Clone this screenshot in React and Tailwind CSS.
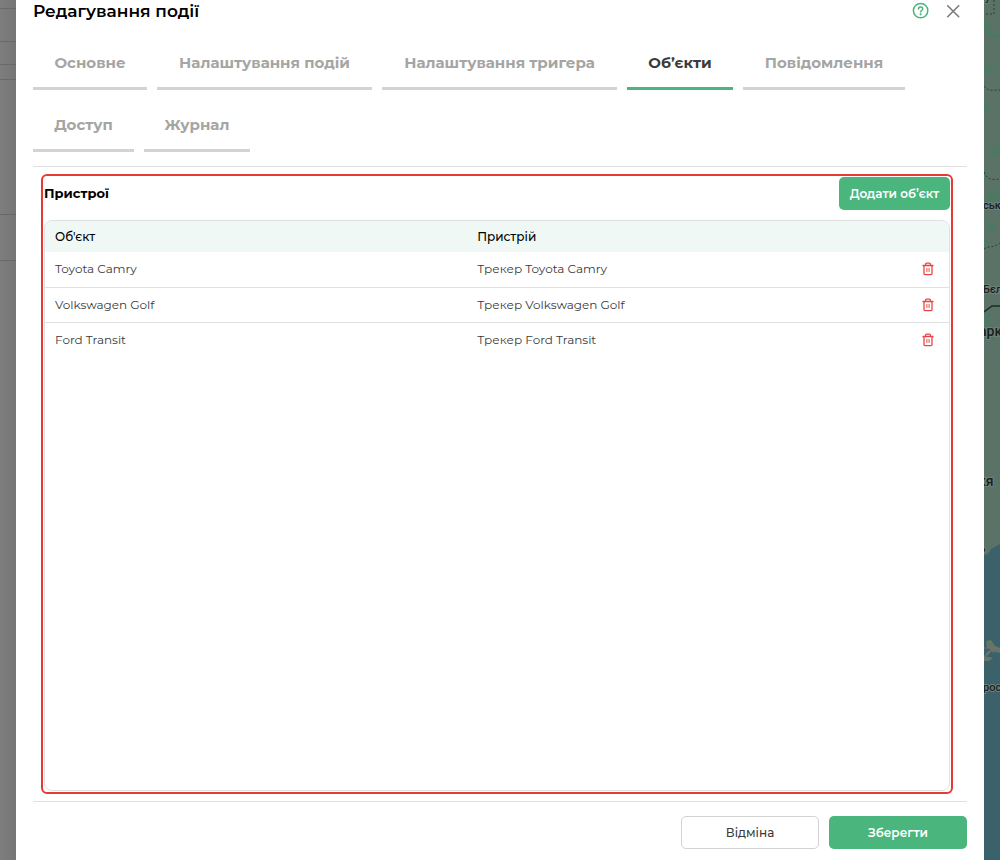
import React, { useState } from "react";

const tabs = [
  { label: "Основне", width: "min-w-[114px]" },
  { label: "Налаштування подій", width: "min-w-[215px]" },
  { label: "Налаштування тригера", width: "min-w-[235px]" },
  { label: "Об’єкти", width: "min-w-[106px]" },
  { label: "Повідомлення", width: "min-w-[162px]" },
  { label: "Доступ", width: "min-w-[101px]" },
  { label: "Журнал", width: "min-w-[106px]" },
];

const devices = [
  { object: "Toyota Camry", device: "Трекер Toyota Camry" },
  { object: "Volkswagen Golf", device: "Трекер Volkswagen Golf" },
  { object: "Ford Transit", device: "Трекер Ford Transit" },
];

function HelpIcon() {
  return (
    <svg width="18" height="18" viewBox="0 0 18 18" fill="none" stroke="#4ab57d" strokeWidth="1.5" strokeLinecap="round" aria-hidden="true">
      <circle cx="8.600" cy="8.600" r="7.200" />
      <path d="M6.500 7.100c0-1.300 1-2 2.100-2s2.100.8 2.100 1.900c0 1.500-2.100 1.500-2.100 2.900" />
      <circle cx="8.600" cy="12.300" r="1.100" fill="#4ab57d" stroke="none" />
    </svg>
  );
}

function CloseIcon() {
  return (
    <svg width="14" height="14" viewBox="0 0 14 14" fill="none" stroke="#7c7c7c" strokeWidth="1.600" strokeLinecap="round" aria-hidden="true">
      <path d="M1.700 1.700l11 11M12.700 1.700l-11 11" />
    </svg>
  );
}

function TrashIcon() {
  return (
    <svg width="12" height="14" viewBox="0 0 12 14" fill="none" stroke="#ea4444" strokeWidth="1.300" strokeLinecap="round" strokeLinejoin="round" aria-hidden="true">
      <path d="M1 3.500h10M3.600 3.300V2.100c0-.7.4-1 1-1h2.800c.6 0 1 .3 1 1v1.200M2 3.700v7.700c0 .8.500 1.300 1.300 1.300h5.400c.8 0 1.300-.5 1.300-1.300V3.700" />
      <path d="M4.900 6.500v3M7.100 6.500v3" strokeWidth="1" />
    </svg>
  );
}

function MapStrip() {
  return (
    <svg className="h-full w-full" viewBox="0 0 16 860" preserveAspectRatio="xMinYMin slice" aria-hidden="true">
      <rect width="16" height="860" fill="#5b7367" />
      <g fill="#4a7a62">
        <path d="M0 20c4 0 5 4 6 10 2 5 6 5 10 4v4C7 40 2 34 0 27z" />
        <path d="M1 67c4-1 6-4 10-4l-3 8-7 4zM0 103l4 3 2 8-6-3zM5 151l10-8v10l-8 6zM0 168c5 3 5 10 0 15zM3 192l8-4 5 10v8L8 200l-7 6zM3 219l9 7-3 8-6-5zM0 240l5-3v5l-5 6zM0 318l6-8-1 16-5 4z" opacity=".7" />
      </g>
      <path d="M0 87C2 77 8 80 12 75l4-5" fill="none" stroke="#596f7b" />
      <path d="M0 212h16M0 344l16 24M0 444l16 6" fill="none" stroke="#586f77" />
      <g fill="none" stroke="#303c36" strokeDasharray="2 2">
        <path d="M10 0v14H0M0 86c4 6 10 4 16 4M0 172c3 8 8 8 16 7M0 249c5-4 8 0 16-6" />
      </g>
      <path d="M0 312l8-6h8" fill="none" stroke="#202a26" strokeWidth="1.500" />
      <path d="M3 316l3-4-1 6zM8 337l3 3h-3z" fill="#397a80" />
      <path d="M0 555l4-1 3-5 9-5v316H0z" fill="#3b626b" />
      <path d="M1 548l4-5h5l3-6h3" fill="none" stroke="#57727a" />
      <path d="M2 641l5-1 4 6 5 2v5l-8-2-4 4-4 2 3-5 4-3-4-1zM0 656l9 2-4 3H0z" fill="#667568" />
      <path d="M0 648h6l4 5" fill="none" stroke="#776f6b" />
      <g fill="#18201d" stroke="#718078" strokeWidth="2" paintOrder="stroke" fontFamily="Roboto, sans-serif" fontWeight="500">
        <text x="-1" y="209" fontSize="11">ськ</text>
        <text x="-1" y="293" fontSize="11">Бєл</text>
        <text x="-5" y="336" fontSize="14">арк</text>
        <text x="-6" y="486" fontSize="14">кя</text>
        <text x="-4" y="552" fontSize="10">ь</text>
        <text x="-1" y="691" fontSize="11">рос</text>
        <text x="1" y="1" fontSize="11">у</text>
      </g>
    </svg>
  );
}

export default function App() {
  const [active, setActive] = useState(3);
  return (
    <div className="flex h-screen min-h-[600px] overflow-hidden bg-[#7b7b7b] font-['Montserrat','Inter',sans-serif] text-[#3b3b3b]">
      <div className="flex w-4 shrink-0 flex-col bg-linear-to-r from-[#7e7e7e] to-[#757575]" aria-hidden="true">
        <div className="h-[9px] border-b border-[#686868]" />
        <div className="h-[33px] border-b border-[#686868]" />
        <div className="h-[23px] border-b border-[#686868]" />
        <div className="h-[15px] border-b border-[#686868]" />
        <div className="h-[135px] border-b border-[#686868]" />
        <div className="h-[46px] border-b border-[#686868]" />
      </div>

      <main className="flex min-w-0 flex-1 flex-col bg-white px-[17px]">
        <header className="flex h-[22px] items-center justify-between">
          <h1 className="text-[17px] leading-[22px] font-semibold text-black">Редагування події</h1>
          <div className="flex items-center gap-4 pr-[7px]">
            <button type="button" aria-label="Довідка"><HelpIcon /></button>
            <button type="button" aria-label="Закрити"><CloseIcon /></button>
          </div>
        </header>

        <nav className="mt-4 flex flex-wrap gap-[10px] border-b border-[#e0e0e0] pb-[14px]">
          {tabs.map((tab, i) => (
            <button
              key={tab.label}
              type="button"
              onClick={() => setActive(i)}
              className={`h-[52px] border-b-3 pt-[2px] text-center text-[15px] font-bold whitespace-nowrap ${tab.width} ${
                i === active ? "border-[#4ab57d] text-[#3b3b3b]" : "border-[#d3d3d3] text-[#a5a5a3]"
              }`}
            >
              {tab.label}
            </button>
          ))}
        </nav>

        <section className="mt-[7px] mr-[14px] ml-2 flex min-h-0 flex-1 flex-col rounded-md border-2 border-[#e53935] p-px">
          <div className="flex items-center justify-between">
            <h2 className="text-[13px] font-bold text-black">Пристрої</h2>
            <button type="button" className="h-[33px] w-[111px] rounded-[5px] bg-[#4ab57d] text-xs font-semibold whitespace-nowrap text-white">
              Додати об’єкт
            </button>
          </div>
          <div className="mt-[10px] min-h-0 flex-1 overflow-hidden rounded-lg border border-[#e0e0e0]">
            <table className="w-full table-fixed border-collapse text-left text-xs">
              <colgroup>
                <col className="w-[46.7%]" />
                <col />
                <col className="w-[42px]" />
              </colgroup>
              <thead className="bg-[#eff8f5] text-black">
                <tr className="h-[31px]">
                  <th className="px-[10px] font-medium">Об'єкт</th>
                  <th className="px-[10px] font-medium">Пристрій</th>
                  <th aria-label="Дії" />
                </tr>
              </thead>
              <tbody>
                {devices.map((row) => (
                  <tr key={row.object} className="h-[35px] border-b border-[#e0e0e0] last:border-b-0">
                    <td className="px-[10px]">{row.object}</td>
                    <td className="px-[10px]">{row.device}</td>
                    <td>
                      <button type="button" aria-label={`Видалити ${row.object}`} className="mx-auto block">
                        <TrashIcon />
                      </button>
                    </td>
                  </tr>
                ))}
              </tbody>
            </table>
          </div>
        </section>

        <footer className="mt-[7px] flex justify-end gap-[10px] border-t border-[#e0e0e0] pt-[14px] pb-[11px]">
          <button type="button" className="h-[33px] w-[138px] rounded-[5px] border border-[#d3d3d3] text-xs font-medium">Відміна</button>
          <button type="button" className="h-[33px] w-[138px] rounded-[5px] bg-[#4ab57d] text-xs font-semibold text-white">Зберегти</button>
        </footer>
      </main>

      <div className="w-4 shrink-0 overflow-hidden bg-[#5b7367]"><MapStrip /></div>
    </div>
  );
}
